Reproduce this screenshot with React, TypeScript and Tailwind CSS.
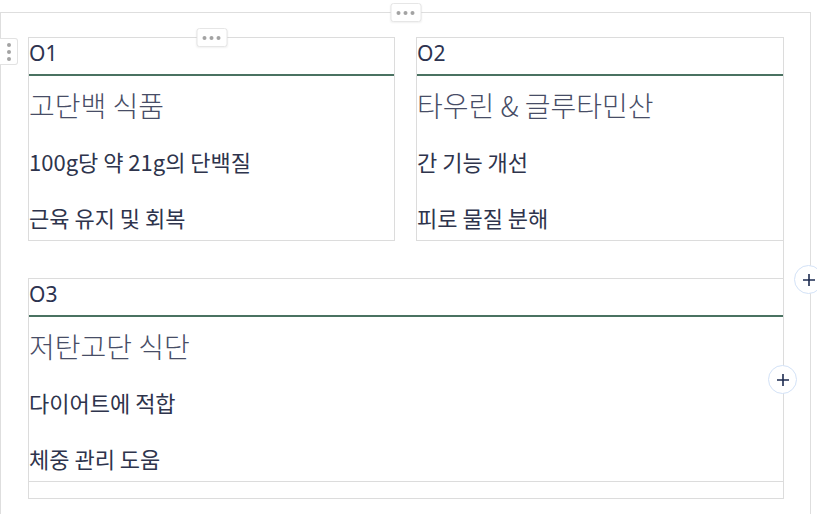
import React from "react";

const font = { fontFamily: '"Noto Sans CJK KR", "Noto Sans", sans-serif' };

interface CardData {
  num: string;
  title: string;
  lines: string[];
}

const cards: CardData[] = [
  { num: "O1", title: "고단백 식품", lines: ["100g당 약 21g의 단백질", "근육 유지 및 회복"] },
  { num: "O2", title: "타우린 & 글루타민산", lines: ["간 기능 개선", "피로 물질 분해"] },
];

const wide: CardData = { num: "O3", title: "저탄고단 식단", lines: ["다이어트에 적합", "체중 관리 도움"] };

function Dots() {
  return (
    <div className="flex items-center gap-[3px]">
      <span className="h-[4px] w-[4px] rounded-full bg-[#a3a3a3]" />
      <span className="h-[4px] w-[4px] rounded-full bg-[#a3a3a3]" />
      <span className="h-[4px] w-[4px] rounded-full bg-[#a3a3a3]" />
    </div>
  );
}

function MoreButton({ className }: { className: string }) {
  return (
    <div
      className={`absolute flex h-[19px] w-[31px] items-center justify-center rounded-[3px] border border-[#e6e6e6] bg-white shadow-[0_1px_2px_rgba(0,0,0,0.06)] ${className}`}
    >
      <Dots />
    </div>
  );
}

function PlusButton({ className }: { className: string }) {
  return (
    <div
      className={`absolute flex h-[29px] w-[29px] items-center justify-center rounded-full border border-[#d3e2f7] bg-white ${className}`}
    >
      <svg width="14" height="14" viewBox="0 0 14 14">
        <path d="M7 1v12M1 7h12" stroke="#1d2b50" strokeWidth="1.6" />
      </svg>
    </div>
  );
}

function CardBody({ card }: { card: CardData }) {
  return (
    <>
      <div className="h-[38px] border-b-2 border-[#4a7261] font-['Noto_Sans',sans-serif] text-[21px] leading-[31px] text-[#2d3350]">
        {card.num}
      </div>
      <div className="flex h-[164px] flex-col pt-[9px]">
        <div className="text-[28px] font-light leading-[40px] text-[#474d66]">{card.title}</div>
        <div className="mt-[21px] text-[22px] leading-[30px] text-[#2e344c]">{card.lines[0]}</div>
        <div className="mt-[26px] text-[22px] leading-[30px] text-[#2e344c]">{card.lines[1]}</div>
      </div>
    </>
  );
}

export default function App() {
  return (
    <div className="relative h-[514px] w-[817px] overflow-hidden bg-white" style={font}>
      <div className="pt-[12px]">
        <div className="relative w-[811px] border border-[#dedede] pb-[40px] pl-[27px] pr-[26px] pt-[24px]">
          <MoreButton className="left-1/2 top-[-10px] -translate-x-1/2" />

          <div className="grid grid-cols-[367px_368px] gap-x-[21px]">
            {cards.map((c, i) => (
              <div key={c.num} className="relative border border-[#dcdcdc]">
                {i === 0 && <MoreButton className="left-1/2 top-[-10px] -translate-x-1/2" />}
                <CardBody card={c} />
              </div>
            ))}
          </div>

          <div className="h-[37px] border-r border-[#dcdcdc]" />

          <div className="border border-[#dcdcdc]">
            <CardBody card={wide} />
            <div className="h-[17px] border-t border-[#dcdcdc]" />
          </div>
        </div>
      </div>

      <div className="absolute left-0 top-[38px] flex h-[27px] w-[18px] flex-col items-center justify-center gap-[3px] rounded-r-[3px] border border-l-0 border-[#e2e2e2] bg-white">
        <span className="h-[4px] w-[4px] rounded-full bg-[#a3a3a3]" />
        <span className="h-[4px] w-[4px] rounded-full bg-[#a3a3a3]" />
        <span className="h-[4px] w-[4px] rounded-full bg-[#a3a3a3]" />
      </div>

      <PlusButton className="left-[794px] top-[265px]" />
      <PlusButton className="left-[768px] top-[365px]" />
    </div>
  );
}
